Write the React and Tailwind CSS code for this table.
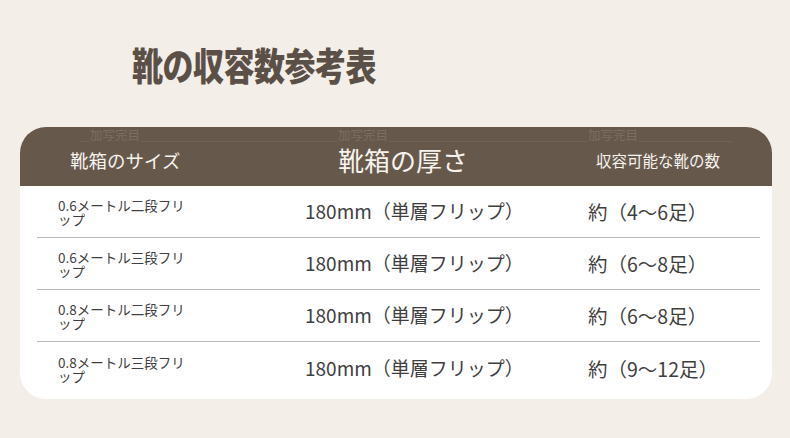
const rows = [
  { size: '0.6メートル二段フリップ', depth: '180mm（単層フリップ）', count: '約（4〜6足）' },
  { size: '0.6メートル三段フリップ', depth: '180mm（単層フリップ）', count: '約（6〜8足）' },
  { size: '0.8メートル二段フリップ', depth: '180mm（単層フリップ）', count: '約（6〜8足）' },
  { size: '0.8メートル三段フリップ', depth: '180mm（単層フリップ）', count: '約（9〜12足）' },
]

export default function App() {
  return (
    <div
      className="w-[790px] h-[438px] overflow-hidden bg-[#f4eee9] pt-[38px]"
      style={{ fontFamily: '"Noto Sans CJK JP", "Noto Sans", sans-serif' }}
    >
      {/* Title */}
      <h1 className="ml-[132px] h-[51px] text-[31px] font-black leading-[51px] tracking-[-0.5px] text-[#5b5047]">
        <span className="inline-block origin-center scale-y-[1.22]">靴の収容数参考表</span>
      </h1>

      {/* Table card */}
      <div className="ml-[20px] mt-[38px] w-[752px] overflow-hidden rounded-[26px] bg-white">
        <div className="relative h-[59px] bg-[#66594c] text-[#f7f2ec]">
          {/* faint watermark */}
          <div className="absolute left-[60px] right-[40px] top-0 flex h-[15px] items-center border-b border-[#6f6356] text-[12.5px] leading-[15px] text-[#7a6e62]">
            <span className="ml-[9px] bg-[#66594c] px-[1px]">加写完目</span>
            <span className="ml-[196px] bg-[#66594c] px-[1px]">加写完目</span>
            <span className="ml-[198px] bg-[#66594c] px-[1px]">加写完目</span>
          </div>
          <div className="grid h-full grid-cols-[285px_282px_1fr] items-center pt-[7px]">
            <div className="pl-[50px] text-[18.5px] leading-[24px]">靴箱のサイズ</div>
            <div className="pl-[33px] text-[26px] leading-[30px]">靴箱の厚さ</div>
            <div className="pl-[9px] text-[15.5px] leading-[22px]">収容可能な靴の数</div>
          </div>
        </div>

        {rows.map((r, i) => (
          <div key={i}>
            <div
              className={
                'grid grid-cols-[285px_282px_1fr] items-center text-[#3f3f3f] ' +
                (i === rows.length - 1 ? 'h-[57px] pb-[4px]' : 'h-[51px]')
              }
            >
              <div className="pl-[38px] text-[13.5px] leading-[14px]">
                <div className="w-[134px]">{r.size}</div>
              </div>
              <div className="text-[19px]">{r.depth}</div>
              <div className="pl-[1px] text-[19.5px]">{r.count}</div>
            </div>
            {i < rows.length - 1 && <div className="ml-[17px] mr-[12px] h-px bg-[#b9b9b9]" />}
          </div>
        ))}
      </div>
    </div>
  )
}
